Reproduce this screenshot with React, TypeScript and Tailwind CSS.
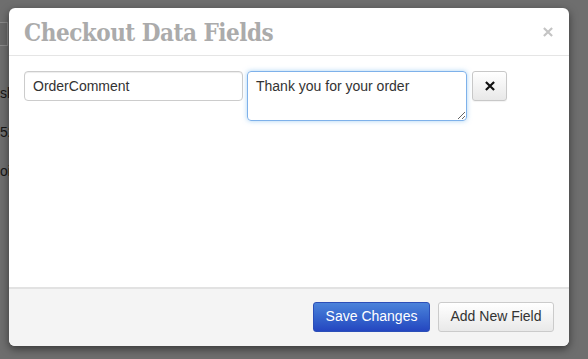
const SANS = "font-['Liberation_Sans','Helvetica',Arial,sans-serif]";

function TimesIcon({ className }: { className?: string }) {
  return (
    <svg viewBox="0 0 12 12" className={className} aria-hidden="true">
      <path d="M2 2 L10 10 M10 2 L2 10" stroke="currentColor" strokeWidth="2.6" strokeLinecap="square" />
    </svg>
  );
}

function BackgroundPage() {
  // the page behind the overlay, only its left edge peeks out
  return (
    <div className={`h-full w-full bg-[#6e6e6e] ${SANS} text-[14px] text-[#151515]`}>
      <div className="pt-[22px]">
        <div className="h-[24px] w-[8px] border border-l-0 border-[#8a8a8a] bg-[#686868]" />
      </div>
      <div className="flex flex-col gap-[25px] pt-[40px]">
        <span className="leading-[14px]">sl</span>
        <span className="leading-[14px]">52</span>
        <span className="leading-[14px]">oi</span>
      </div>
    </div>
  );
}

function CheckoutFieldsModal() {
  return (
    <div className="absolute left-[9px] top-[8px] w-[560px] h-[338px] bg-white rounded-[6px] shadow-[0_3px_9px_rgba(0,0,0,0.5)] flex flex-col overflow-hidden">
      <div className="h-[48px] shrink-0 border-b border-[#e5e5e5] flex items-center justify-between pl-[15px] pr-[16px]">
        <h3 className="font-['DejaVu_Serif','Liberation_Serif',serif] font-bold text-[24px] tracking-[-0.5px] text-[#ababab] leading-none mt-[2px] [font-stretch:condensed]">
          Checkout Data Fields
        </h3>
        <button className="text-[#c4c4c4] mt-[1px]">
          <TimesIcon className="size-[10px]" />
        </button>
      </div>

      <div className="flex-1 pt-[15px] px-[15px]">
        <div className="flex items-start">
          <input
            defaultValue="OrderComment"
            className={`w-[219px] h-[30px] border border-[#cccccc] rounded-[4px] px-[8px] ${SANS} text-[14px] text-[#333] outline-none shadow-[inset_0_1px_1px_rgba(0,0,0,0.075)]`}
          />
          <textarea
            defaultValue="Thank you for your order"
            className={`ml-[4px] w-[220px] h-[50px] border border-[#7eb1ea] rounded-[4px] px-[8px] pt-[5px] ${SANS} text-[14px] leading-[18px] text-[#333] outline-none shadow-[0_0_5px_rgba(102,175,233,0.55)]`}
          />
          <button className="ml-[5px] w-[35px] h-[30px] flex items-center justify-center rounded-[3px] border border-[#c8c8c8] bg-gradient-to-b from-white to-[#e8e8e8] text-[#111] shadow-[0_1px_1px_rgba(0,0,0,0.05)]">
            <TimesIcon className="size-[10px]" />
          </button>
        </div>
      </div>

      <div className="h-[59px] shrink-0 border-t-2 border-[#e2e2e2] bg-[#f4f4f4] flex items-center justify-end gap-[8px] pr-[15px] pb-[2px]">
        <button className={`w-[117px] h-[30px] rounded-[3px] border border-[#2c4fb8] bg-gradient-to-b from-[#4c83da] to-[#2546c0] text-white ${SANS} text-[14px]`}>
          Save Changes
        </button>
        <button className={`w-[116px] h-[30px] rounded-[3px] border border-[#cbcbcb] bg-gradient-to-b from-white to-[#e9e9e9] text-[#333] ${SANS} text-[14px]`}>
          Add New Field
        </button>
      </div>
    </div>
  );
}

export default function App() {
  return (
    <div className="relative w-[588px] h-[359px] overflow-hidden">
      <BackgroundPage />
      <CheckoutFieldsModal />
    </div>
  );
}
